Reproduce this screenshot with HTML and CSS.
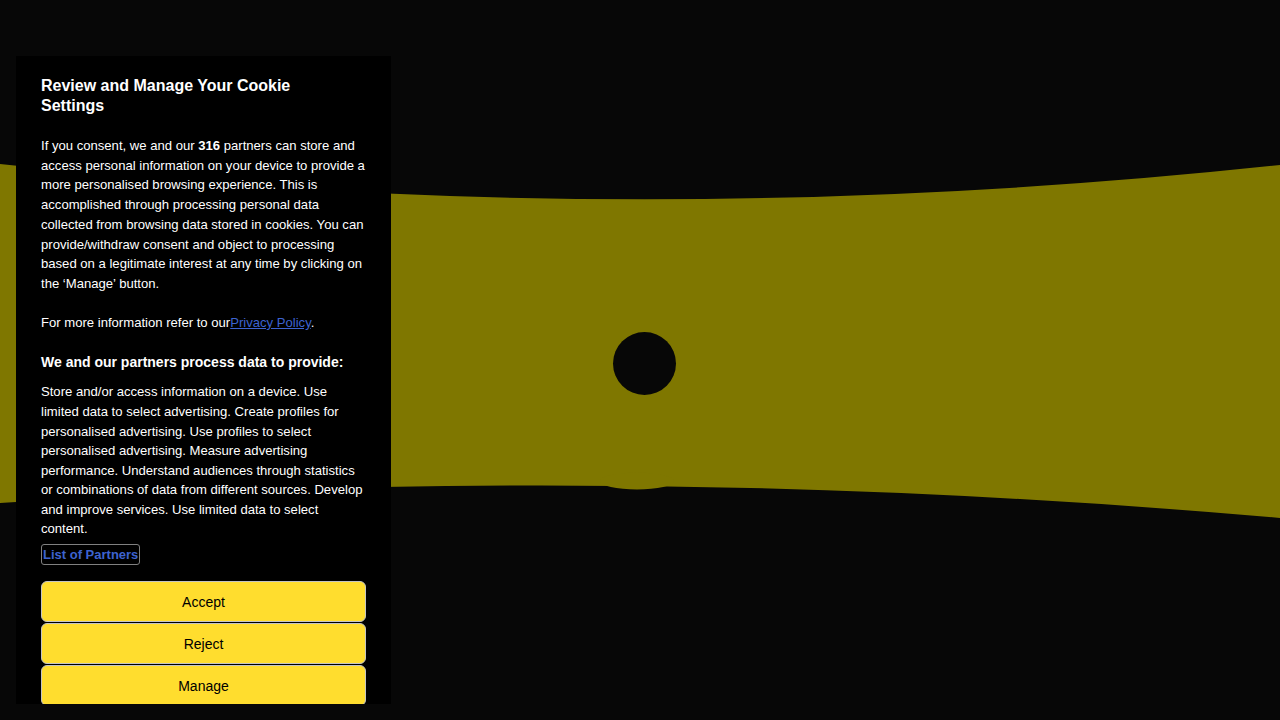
FILE: index.html
```html
<!DOCTYPE html>
<html lang="en">
<head>
    <meta charset="UTF-8">
    <meta name="viewport" content="width=device-width, initial-scale=1.0">
    <title>Cookie Settings</title>
    <link rel="stylesheet" href="styles.css">
</head>
<body>
    <div class="stage">
        <svg class="scene" viewBox="0 0 1280 720" width="1280" height="720">
            <path d="M0 164 Q640 234 1280 165 L1280 518 Q640 461.5 0 503 Z" fill="#7f7700"/>
            <ellipse cx="637" cy="481" rx="37" ry="8.5" fill="#7f7700"/>
            <circle cx="644.5" cy="363.5" r="31.5" fill="#070707"/>
        </svg>
    </div>

    <div class="consent">
        <h2 class="consent-title">Review and Manage Your Cookie Settings</h2>

        <p class="consent-text">If you consent, we and our <strong>316</strong> partners can store and access personal information on your device to provide a more personalised browsing experience. This is accomplished through processing personal data collected from browsing data stored in cookies. You can provide/withdraw consent and object to processing based on a legitimate interest at any time by clicking on the ‘Manage’ button.</p>

        <p class="consent-text">For more information refer to our<a href="#" class="link">Privacy Policy</a>.</p>

        <h3 class="consent-subtitle">We and our partners process data to provide:</h3>

        <p class="consent-text purposes">Store and/or access information on a device. Use limited data to select advertising. Create profiles for personalised advertising. Use profiles to select personalised advertising. Measure advertising performance. Understand audiences through statistics or combinations of data from different sources. Develop and improve services. Use limited data to select content.</p>

        <button class="partners-btn">List of Partners</button>

        <div class="actions">
            <button class="action-btn">Accept</button>
            <button class="action-btn">Reject</button>
            <button class="action-btn">Manage</button>
        </div>
    </div>
</body>
</html>
```

FILE: styles.css
```css
html, body {
    margin: 0;
    padding: 0;
    background: #070707;
    overflow: hidden;
}

body {
    font-family: "Liberation Sans", Arial, sans-serif;
    color: #fff;
}

.stage {
    width: 1280px;
    height: 720px;
}

.scene {
    display: block;
}

.consent {
    position: fixed;
    left: 16px;
    top: 56px;
    width: 375px;
    height: 648px;
    box-sizing: border-box;
    padding: 20px 25px 0;
    background: #000;
    overflow: hidden;
}

.consent-title {
    max-width: 300px;
    margin: 0 0 20px;
    font-size: 16px;
    line-height: 20px;
    font-weight: bold;
}

.consent-text {
    margin: 0 0 19.5px;
    font-size: 13.1px;
    line-height: 19.7px;
}

.consent-text.purposes {
    margin-bottom: 5px;
    line-height: 19.6px;
}

.consent-subtitle {
    margin: 0 0 9px;
    font-size: 14px;
    line-height: 21px;
    font-weight: bold;
}

.link {
    color: #3d63d0;
    text-decoration: underline;
}

.partners-btn {
    display: block;
    margin: 0;
    padding: 0 1px;
    height: 21px;
    background: transparent;
    border: 1px solid #808080;
    border-radius: 3px;
    color: #3d63d0;
    font-family: inherit;
    font-size: 13px;
    font-weight: bold;
    line-height: 19px;
    cursor: pointer;
}

.actions {
    display: flex;
    flex-direction: column;
    gap: 1px;
    margin-top: 16px;
}

.action-btn {
    height: 41px;
    box-sizing: border-box;
    width: 100%;
    background: #ffdd2e;
    border: 1px solid #c4c4c4;
    border-radius: 6px;
    color: #000;
    font-family: inherit;
    font-size: 14px;
    cursor: pointer;
}
```
